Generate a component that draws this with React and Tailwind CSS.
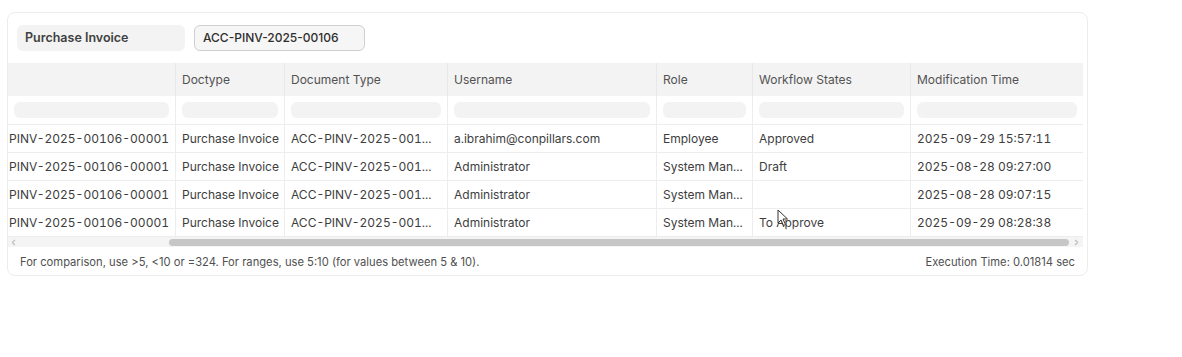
import { ChevronLeft, ChevronRight } from "lucide-react";

const columns = [
  { label: "", width: "w-[167px]" },
  { label: "Doctype", width: "w-[109px]" },
  { label: "Document Type", width: "w-[163px]" },
  { label: "Username", width: "w-[209px]" },
  { label: "Role", width: "w-[96px]" },
  { label: "Workflow States", width: "w-[158px]" },
  { label: "Modification Time", width: "w-[173px]" },
];

const rows = [
  ["ACC-PINV-2025-00106-00001", "Purchase Invoice", "ACC-PINV-2025-001...", "a.ibrahim@conpillars.com", "Employee", "Approved", "2025-09-29 15:57:11"],
  ["ACC-PINV-2025-00106-00001", "Purchase Invoice", "ACC-PINV-2025-001...", "Administrator", "System Man...", "Draft", "2025-08-28 09:27:00"],
  ["ACC-PINV-2025-00106-00001", "Purchase Invoice", "ACC-PINV-2025-001...", "Administrator", "System Man...", "", "2025-08-28 09:07:15"],
  ["ACC-PINV-2025-00106-00001", "Purchase Invoice", "ACC-PINV-2025-001...", "Administrator", "System Man...", "To Approve", "2025-09-29 08:28:38"],
];

const App = () => {
  return (
    <div className="w-[1182px] h-[357px] bg-white pl-[7px] pt-[12px] font-['Inter',sans-serif] text-[#3d3d3d] relative">
      <div className="w-[1081px] border border-[#ededed] rounded-lg bg-white">
        {/* Filters */}
        <div className="flex gap-[9px] px-[9px] py-[12px]">
          <div className="w-[168px] h-[26px] rounded-md bg-[#f3f3f3] flex items-center pl-[8px] text-[12.5px] font-semibold text-[#404040]">
            Purchase Invoice
          </div>
          <div className="w-[171px] h-[26px] rounded-md bg-[#f6f6f6] border border-[#cfcfcf] flex items-center pl-[8px] text-[12px] font-medium text-[#2e2e2e]">
            ACC-PINV-2025-00106
          </div>
        </div>

        {/* Table */}
        <div className="w-[1075px] overflow-hidden">
          <div className="flex h-[33px] bg-[#f3f3f3]">
            {columns.map((c, i) => (
              <div
                key={i}
                className={`${c.width} shrink-0 flex items-center px-[6px] text-[12px] text-[#525252] ${i > 0 ? "border-l border-[#e8e8e8]" : ""}`}
              >
                {c.label}
              </div>
            ))}
          </div>
          <div className="flex h-[29px] border-b border-[#ededed]">
            {columns.map((c, i) => (
              <div
                key={i}
                className={`${c.width} shrink-0 flex items-center px-[6px] ${i > 0 ? "border-l border-[#ededed]" : ""}`}
              >
                <div className="w-full h-[16px] rounded-md bg-[#f3f3f3]" />
              </div>
            ))}
          </div>
          {rows.map((r, ri) => (
            <div key={ri} className="flex h-[28px] border-b border-[#ededed]">
              {r.map((cell, i) => (
                <div
                  key={i}
                  className={`${columns[i].width} shrink-0 flex items-center overflow-hidden whitespace-nowrap text-[12px] tabular-nums ${i === 0 ? "justify-end pr-[6px]" : "px-[6px] border-l border-[#ededed]"}`}
                >
                  {cell}
                </div>
              ))}
            </div>
          ))}
          {/* Scrollbar */}
          <div className="flex items-center h-[10px] bg-[#f4f4f4]">
            <ChevronLeft className="w-[9px] h-[9px] text-[#bdbdbd] ml-[1px]" strokeWidth={3} />
            <div className="ml-[151px] w-[900px] h-[7px] rounded-full bg-[#c6c6c6]" />
            <ChevronRight className="w-[9px] h-[9px] text-[#bdbdbd] ml-[3px]" strokeWidth={3} />
          </div>
        </div>

        {/* Footer */}
        <div className="flex justify-between items-center h-[28px] pt-[2px] px-[12px] text-[11.2px] text-[#505050]">
          <span>For comparison, use &gt;5, &lt;10 or =324. For ranges, use 5:10 (for values between 5 &amp; 10).</span>
          <span>Execution Time: 0.01814 sec</span>
        </div>
      </div>

      {/* Mouse cursor */}
      <svg className="absolute left-[777px] top-[209px]" width="12" height="18" viewBox="0 0 12 18">
        <path d="M1 1 L1 14 L4 11 L6.5 16.5 L8.5 15.5 L6 10 L10.5 10 Z" fill="white" stroke="#333" strokeWidth="1" strokeLinejoin="round" />
      </svg>
    </div>
  );
};

export default App;
